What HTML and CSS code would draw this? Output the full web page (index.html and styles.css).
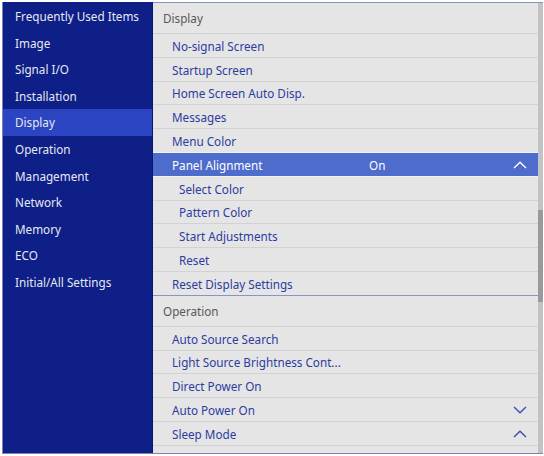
FILE: index.html
```html
<!DOCTYPE html>
<html>
<head>
<meta charset="utf-8">
<link rel="stylesheet" href="styles.css">
</head>
<body>
<div class="frame">
  <nav class="sidebar">
    <div class="nav-item">Frequently Used Items</div>
    <div class="nav-item">Image</div>
    <div class="nav-item">Signal I/O</div>
    <div class="nav-item">Installation</div>
    <div class="nav-item active">Display</div>
    <div class="nav-item">Operation</div>
    <div class="nav-item">Management</div>
    <div class="nav-item">Network</div>
    <div class="nav-item">Memory</div>
    <div class="nav-item">ECO</div>
    <div class="nav-item">Initial/All Settings</div>
  </nav>
  <main class="panel">
    <div class="list">
      <div class="section-head">Display</div>
      <div class="row"><span class="label">No-signal Screen</span></div>
      <div class="row"><span class="label">Startup Screen</span></div>
      <div class="row"><span class="label">Home Screen Auto Disp.</span></div>
      <div class="row"><span class="label">Messages</span></div>
      <div class="row"><span class="label">Menu Color</span></div>
      <div class="row selected"><span class="label">Panel Alignment</span><span class="value">On</span>
        <svg class="chev" viewBox="0 0 14 8"><polyline points="1,7 7,1.2 13,7"/></svg></div>
      <div class="row sub"><span class="label">Select Color</span></div>
      <div class="row sub"><span class="label">Pattern Color</span></div>
      <div class="row sub"><span class="label">Start Adjustments</span></div>
      <div class="row sub"><span class="label">Reset</span></div>
      <div class="row last"><span class="label">Reset Display Settings</span></div>
      <div class="section-head">Operation</div>
      <div class="row"><span class="label">Auto Source Search</span></div>
      <div class="row"><span class="label">Light Source Brightness Cont...</span></div>
      <div class="row"><span class="label">Direct Power On</span></div>
      <div class="row"><span class="label">Auto Power On</span>
        <svg class="chev" viewBox="0 0 14 8"><polyline points="1,1 7,6.8 13,1"/></svg></div>
      <div class="row"><span class="label">Sleep Mode</span>
        <svg class="chev" viewBox="0 0 14 8"><polyline points="1,7 7,1.2 13,7"/></svg></div>
      <div class="row sub"><span class="label">Sleep Mode Timer</span><span class="value">30 min</span></div>
    </div>
    <div class="scrollbar"><div class="thumb"></div></div>
  </main>
</div>
</body>
</html>
```
FILE: styles.css
```css
html, body {
  margin: 0;
  padding: 0;
  background: #ffffff;
}
body {
  font-family: "Noto Sans", "Open Sans", sans-serif;
  font-size: 11.7px;
}
.frame {
  margin: 2px 0 0 2px;
  width: 541px;
  height: 452px;
  display: flex;
  box-sizing: border-box;
  border-left: 1px solid #7d86b0;
  border-bottom: 1px solid #7d86b0;
  overflow: hidden;
}
.sidebar {
  width: 149px;
  flex: none;
  background: #0e1f87;
  padding-top: 1px;
  border-right: 1px solid #0a1670;
}
.nav-item {
  height: 26.6px;
  line-height: 26.6px;
  padding-left: 12px;
  color: #e6e8f2;
  white-space: nowrap;
}
.nav-item.active {
  background: #2b45c2;
}
.panel {
  flex: 1;
  display: flex;
  background: #e5e5e5;
  border-top: 1px solid #8290c4;
  min-width: 0;
}
.list {
  flex: 1;
  overflow: hidden;
}
.section-head {
  height: 30px;
  line-height: 31px;
  padding-left: 10px;
  color: #585858;
  border-bottom: 1px solid #d0d0d0;
}
.row {
  height: 23.8px;
  box-sizing: border-box;
  display: flex;
  align-items: center;
  padding-left: 19px;
  padding-right: 11px;
  padding-top: 1px;
  color: #2c3c9f;
  border-bottom: 1px solid #d2d2d2;
  white-space: nowrap;
}
.row.sub {
  padding-left: 26px;
}
.row.sub .label {
  width: 190px;
}
.row.last {
  border-bottom: 1px solid #8993c6;
}
.label {
  width: 197px;
  flex: none;
}
.value {
  flex: 1;
}
.row.selected {
  background: #4e6ccb;
  color: #ffffff;
  border-top: 1px solid #f2f2f2;
  border-bottom: 1px solid #f2f2f2;
  margin-top: -1px;
  height: 24.8px;
}
.chev {
  margin-left: auto;
  width: 14px;
  height: 8px;
  fill: none;
  stroke: #3a4fb2;
  stroke-width: 1.4;
}
.row.selected .chev {
  stroke: #ffffff;
}
.scrollbar {
  width: 5px;
  flex: none;
  background: #c3c3c3;
  position: relative;
}
.thumb {
  position: absolute;
  left: 0;
  right: 0;
  top: 207px;
  height: 92px;
  background: #9a9a9a;
}
```
